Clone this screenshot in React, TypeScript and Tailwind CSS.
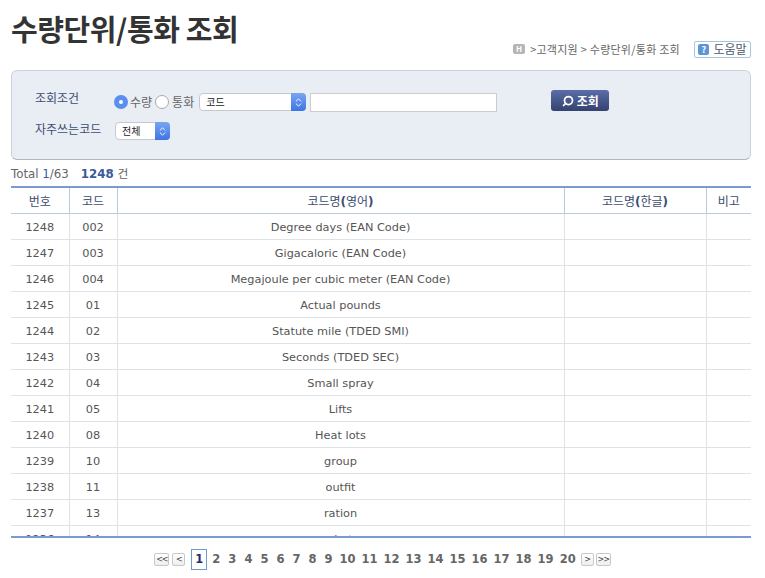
import { ChevronsUpDown, Search } from "lucide-react";

const ROWS = [
  ["1248", "002", "Degree days (EAN Code)"],
  ["1247", "003", "Gigacaloric (EAN Code)"],
  ["1246", "004", "Megajoule per cubic meter (EAN Code)"],
  ["1245", "01", "Actual pounds"],
  ["1244", "02", "Statute mile (TDED SMI)"],
  ["1243", "03", "Seconds (TDED SEC)"],
  ["1242", "04", "Small spray"],
  ["1241", "05", "Lifts"],
  ["1240", "08", "Heat lots"],
  ["1239", "10", "group"],
  ["1238", "11", "outfit"],
  ["1237", "13", "ration"],
  ["1236", "14", "shot"],
];

const PAGES = Array.from({ length: 19 }, (_, i) => i + 2);
const KR = "font-['Noto_Sans_CJK_KR','Noto_Sans',sans-serif]";
const VERDANA = "font-['DejaVu_Sans','Noto_Sans_CJK_KR',sans-serif]";

function SelectBox({ label, width }: { label: string; width: string }) {
  return (
    <div className={`flex h-[18px] ${width} rounded-[4px] border border-[#c4c8cf] bg-white`}>
      <span className="flex-1 pl-[6px] text-[10px] leading-[16px] text-[#222]">{label}</span>
      <span className="-my-px -mr-px flex w-[15px] items-center justify-center rounded-r-[4px] bg-gradient-to-b from-[#7aa5f2] to-[#3f74e4]">
        <ChevronsUpDown className="h-[11px] w-[11px] text-white" strokeWidth={2} />
      </span>
    </div>
  );
}

function PageArrow({ label, width }: { label: string; width: string }) {
  return (
    <span
      className={`flex h-[13px] ${width} items-center justify-center rounded-[2px] border border-[#c8c8c8] bg-gradient-to-b from-white to-[#eeeeee] text-[8px] leading-none font-normal tracking-[-1px] text-[#444]`}
    >
      {label}
    </span>
  );
}

export default function App() {
  return (
    <div className={`h-[578px] w-[765px] overflow-hidden bg-white ${KR}`}>
      <div className="flex h-[70px] items-start justify-between pr-[14px] pl-[11px]">
        <h1 className="mt-[7px] text-[29px] leading-[42px] font-bold tracking-[-0.4px] text-[#333]">
          수량단위/통화 조회
        </h1>
        <div className="mt-[39px] flex items-center">
          <span className="flex h-[10px] w-[12px] items-center justify-center rounded-[2px] bg-[#b5b5b5] text-[8px] leading-none font-bold text-white">
            H
          </span>
          <span className="ml-[5px] text-[11px] leading-[20px] tracking-[0.25px] text-[#666]">
            &gt;고객지원 &gt; 수량단위/통화 조회
          </span>
          <button className="ml-[14px] flex h-[17px] w-[57px] items-center justify-center gap-[4px] rounded-[2px] border border-[#a9c6e0] bg-white text-[12px] leading-none text-[#4a5a70]">
            <span className="flex h-[11px] w-[11px] items-center justify-center rounded-[2px] bg-[#5d96d6] text-[9px] leading-none font-bold text-white">
              ?
            </span>
            도움말
          </button>
        </div>
      </div>

      <div className="mr-[14px] ml-[11px] flex h-[90px] rounded-[6px] border border-[#cdd2da] border-b-[#b0b6c0] bg-[#e9edf4] pt-[19px] pl-[23px]">
        <div className="w-[79px] text-[12px] leading-[16px] text-[#3c4d70]">
          <div>조회조건</div>
          <div className="mt-[15px]">자주쓰는코드</div>
        </div>
        <div className="pt-[2px]">
          <div className="flex h-[20px] items-center">
            <span className="flex h-[14px] w-[14px] items-center justify-center rounded-full bg-[#5a8ef0]">
              <span className="h-[4px] w-[4px] rounded-full bg-white" />
            </span>
            <span className="ml-[2px] text-[12px] text-[#666]">수량</span>
            <span className="ml-[3px] h-[14px] w-[14px] rounded-full border border-[#aaa] bg-white" />
            <span className="ml-[3px] text-[12px] text-[#666]">통화</span>
            <div className="ml-[5px]">
              <SelectBox label="코드" width="w-[107px]" />
            </div>
            <span className="ml-[4px] h-[19px] w-[187px] border border-[#ccc] bg-white" />
            <button className="-mt-[3px] ml-[54px] flex h-[21px] w-[58px] items-center justify-center gap-[3px] rounded-[3px] bg-gradient-to-b from-[#5b6ea8] to-[#34426f] text-[12px] leading-none font-bold text-white">
              <Search className="h-[12px] w-[12px] -scale-x-100" strokeWidth={3.5} />
              조회
            </button>
          </div>
          <div className="mt-[10px] ml-[1px]">
            <SelectBox label="전체" width="w-[55px]" />
          </div>
        </div>
      </div>

      <div className={`mt-[6px] ml-[11px] h-[20px] text-[11.8px] leading-[16px] text-[#666] ${VERDANA}`}>
        Total <span className="text-[#3a5a9c]">1</span>/63
        <span className="ml-[12px] font-bold text-[#3a5a9c]">1248</span> 건
      </div>

      <div className="mr-[14px] ml-[11px] h-[352px] overflow-hidden border-y-2 border-[#7b9bd0]">
        <table className={`w-full table-fixed border-collapse text-center text-[11.3px] text-[#555] ${VERDANA}`}>
          <colgroup>
            <col className="w-[58px]" />
            <col className="w-[48px]" />
            <col className="w-[447px]" />
            <col className="w-[142px]" />
            <col className="w-[45px]" />
          </colgroup>
          <thead>
            <tr className="h-[25px] border-b border-[#b9c9de] text-[12px] text-[#3c4d70]">
              <th className="border-r border-[#b9c9de] pt-[3px] font-normal">번호</th>
              <th className="border-r border-[#b9c9de] pt-[3px] font-normal">코드</th>
              <th className="border-r border-[#b9c9de] pt-[3px] font-normal">
                코드명<b>(</b>영어<b>)</b>
              </th>
              <th className="border-r border-[#b9c9de] pt-[3px] font-normal">
                코드명<b>(</b>한글<b>)</b>
              </th>
              <th className="pt-[3px] font-normal">비고</th>
            </tr>
          </thead>
          <tbody>
            {ROWS.map((row) => (
              <tr key={row[0]} className="h-[26px] border-b border-[#dfe2e6]">
                <td className="border-r border-[#dfe2e6] pt-[4px]">{row[0]}</td>
                <td className="border-r border-[#dfe2e6] pt-[4px]">{row[1]}</td>
                <td className="border-r border-[#dfe2e6] pt-[4px]">{row[2]}</td>
                <td className="border-r border-[#dfe2e6]" />
                <td />
              </tr>
            ))}
          </tbody>
        </table>
      </div>

      <div className={`mt-[11px] flex items-center justify-center text-[11.5px] font-bold text-[#666] ${VERDANA}`}>
        <PageArrow label="<<" width="w-[15px]" />
        <span className="ml-[3px]">
          <PageArrow label="<" width="w-[13px]" />
        </span>
        <span className="mr-[1px] ml-[6px] flex h-[21px] w-[16px] items-center justify-center border border-[#6f9bc8] text-[#1f2f6f]">
          1
        </span>
        {PAGES.map((page) => (
          <span key={page} className={page < 10 ? "mx-[4px]" : "mx-[3px]"}>
            {page}
          </span>
        ))}
        <span className="ml-[2px]">
          <PageArrow label=">" width="w-[13px]" />
        </span>
        <span className="ml-[2px]">
          <PageArrow label=">>" width="w-[15px]" />
        </span>
      </div>
    </div>
  );
}
